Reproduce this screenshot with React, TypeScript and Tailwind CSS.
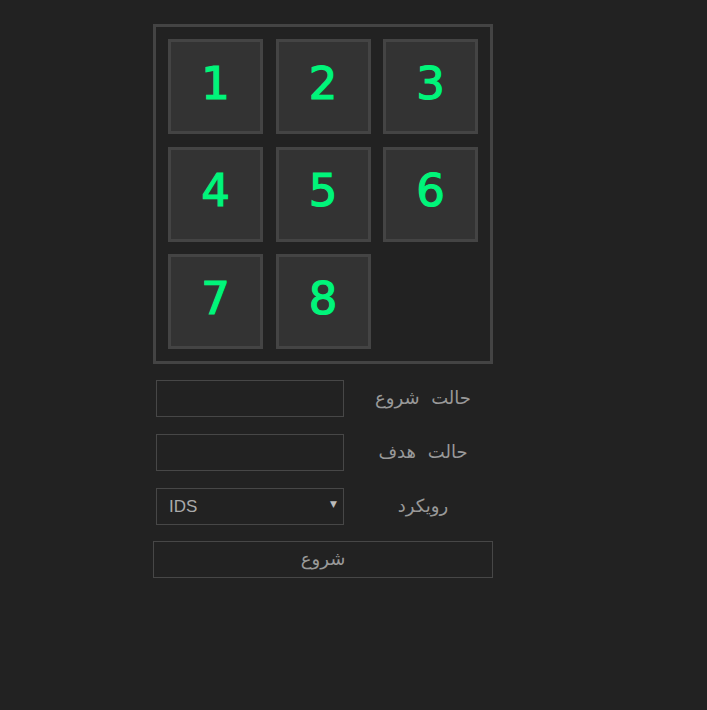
import { useState } from 'react';

const tiles = ['1', '2', '3', '4', '5', '6', '7', '8', ''];

export default function App() {
  const [start, setStart] = useState('');
  const [goal, setGoal] = useState('');
  const [method, setMethod] = useState('IDS');

  return (
    <div className="min-h-[710px] bg-[#222] pt-[24px] font-['DejaVu_Sans',sans-serif]">
      <div className="ml-[153px] w-[340px]">
        {/* Board */}
        <div className="grid h-[340px] grid-cols-[95px_95px_95px] grid-rows-[95px_95px_95px] gap-x-[12.5px] gap-y-[12.5px] border-[3px] border-[#444] p-[12px]">
          {tiles.map((n, i) =>
            n ? (
              <div
                key={i}
                className="flex items-center justify-center border-[3px] border-[#444] bg-[#333] pb-[6px] text-[45px] text-[#00f57a] [-webkit-text-stroke:1.2px_#00f57a]"
              >
                {n}
              </div>
            ) : (
              <div key={i} />
            )
          )}
        </div>

        {/* Form */}
        <div className="mt-[16px] flex flex-col">
          <div className="flex items-center">
            <input
              value={start}
              onChange={(e) => setStart(e.target.value)}
              className="ml-[3px] h-[37px] w-[188px] border border-[#474747] bg-transparent px-3 text-[#aaa] outline-none"
            />
            <div dir="rtl" className="ml-[9px] flex-1 pb-[3px] text-center text-[18px] text-[#999] [word-spacing:6px]">
              حالت شروع
            </div>
          </div>
          <div className="mt-[17px] flex items-center">
            <input
              value={goal}
              onChange={(e) => setGoal(e.target.value)}
              className="ml-[3px] h-[37px] w-[188px] border border-[#474747] bg-transparent px-3 text-[#aaa] outline-none"
            />
            <div dir="rtl" className="ml-[9px] flex-1 pb-[3px] text-center text-[18px] text-[#999] [word-spacing:6px]">
              حالت هدف
            </div>
          </div>
          <div className="mt-[17px] flex items-center">
            <div className="relative ml-[3px] h-[37px] w-[188px]">
              <select
                value={method}
                onChange={(e) => setMethod(e.target.value)}
                className="h-full w-full appearance-none border border-[#474747] bg-[#222] pl-[12px] font-['Liberation_Sans',sans-serif] text-[17px] text-[#aaa] outline-none"
              >
                <option value="IDS">IDS</option>
                <option value="BFS">BFS</option>
                <option value="DFS">DFS</option>
                <option value="A*">A*</option>
              </select>
              <span className="pointer-events-none absolute right-[7px] top-[12px] text-[9px] leading-none text-[#bbb]">▼</span>
            </div>
            <div dir="rtl" className="ml-[9px] flex-1 pb-[3px] text-center text-[18px] text-[#999]">
              رویکرد
            </div>
          </div>
          <button className="mt-[16px] h-[37px] w-[340px] border border-[#474747] bg-transparent pb-[2px] text-[18px] text-[#999]">
            شروع
          </button>
        </div>
      </div>
    </div>
  );
}
